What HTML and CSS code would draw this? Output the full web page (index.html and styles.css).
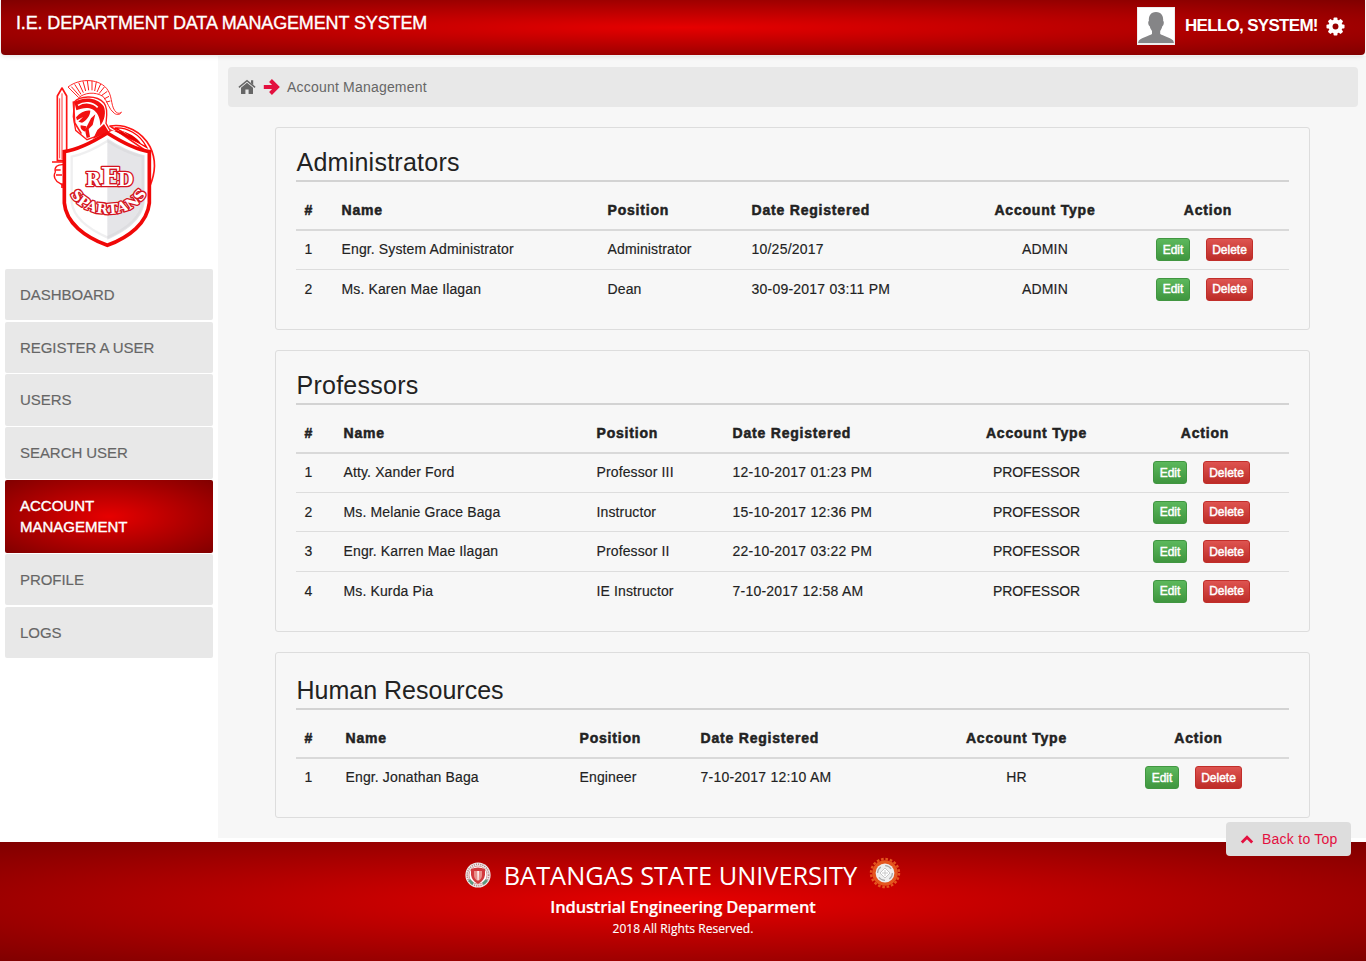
FILE: index.html
```html
<!DOCTYPE html>
<html lang="en">
<head>
<meta charset="utf-8">
<title>Account Management</title>
<link rel="stylesheet" href="styles.css">
</head>
<body>
<header class="topbar">
  <div class="brand">I.E. DEPARTMENT DATA MANAGEMENT SYSTEM</div>
  <div class="user">
    <svg class="avatar" viewBox="0 0 38 38"><rect width="38" height="38" fill="#ededed"/><rect x="1" y="1" width="36" height="35" fill="#fff"/><path d="M19 5c5.500 0 7.500 4 7.200 9 1 0 .8 4.500-.8 5-.4 2-1.400 3.600-2.200 5v3c3 2 9 3 13 6.500l.8 2.500H1l.8-2.500C6 30 12 29 15 27v-3c-1-1.500-1.900-3-2.300-5-1.600-.5-1.900-5-.8-5C11.500 9 13.500 5 19 5z" fill="#858587"/></svg>
    <span class="hello">HELLO, SYSTEM!</span>
    <svg class="gear" viewBox="0 0 20 20"><g fill="#fff"><circle cx="10" cy="10" r="7.400"/><g id="teeth"><rect x="7.900" y=".5" width="4.200" height="19" rx="1"/><rect x=".5" y="7.900" width="19" height="4.200" rx="1"/></g><use href="#teeth" transform="rotate(45 10 10)"/></g><circle cx="10" cy="10" r="3.100" fill="#960000"/></svg>
  </div>
</header>
<div class="layout">
  <aside class="sidebar">
    <svg class="logo" viewBox="0 0 390 555">
      <g fill="#fff" stroke="#ff1414" stroke-width="5" stroke-linejoin="round">
        <path d="M52 272V78l14-24 14 24v194z"/>
        <path d="M66 70v198M59 85v180" stroke-width="2.500" fill="none"/>
        <path d="M210 168c48-8 96 18 120 62 18 36 17 78-1 120V250z"/>
        <path d="M72 284c-20-2-30 8-26 22-8 12 0 28 14 34l12 8z" stroke-width="4"/>
        <path d="M36 276h36M46 300h16M48 315h18M66 340v14" fill="none" stroke-width="5"/>
      </g>
      <path d="M224 174c36-3 76 18 96 58-16-9-38-22-60-31-8-12-19-21-36-27z" fill="#fff" stroke="#f00" stroke-width="4"/>
      <path d="M212 182c35-1 52 8 64 27l-66-32zM236 180c30 8 55 21 68 42l-30-14c-7-14-20-22-38-28z" fill="#e60000"/>
      <path d="M84 51c38-29 98-25 120 10 14 22 8 52 25 66 6 5 12 3 15-1-2 8-12 10-21 4-17-12-20-36-34-51-25-15-55-11-73 4z" fill="#fff" stroke="#ff2b2b" stroke-width="3"/>
      <g stroke="#ff1a1a" stroke-width="3"><path d="M94 50l24 27M104 43l19 30M116 38l14 30M129 34l8 29M142 32l4 29M156 32v29M169 35l-5 28M182 42l-11 24M193 51l-16 20M202 64l-18 13M207 79l-15 8M211 93l-12 3"/></g>
      <path d="M103 96c14-17 65-24 89 3 13 15 8 42 6 61l13 23-70 26-34-28-7-41z" fill="#fff" stroke="#ff1a1a" stroke-width="4"/>
      <path d="M103 96c28-17 70-14 88 13 8 18 3 42-10 58 0-24-10-42-24-49-15-8-33-3-48 3zM108 142c14-16 28-22 43-20-1 18-14 30-25 36l-11-3 14-14-18 10zM122 166l17 3-5 16c-8-4-14-9-12-19zM153 145l13-12-8 32-12 12 4 24-10 3-5-24zM172 180l20-18 13 21-46 24z" fill="#f21010"/>
      <path d="M114 106c19-12 44-10 59 6" fill="none" stroke="#fff" stroke-width="5"/>
      <path d="M100 94l4 64 20 33" fill="none" stroke="#ff1a1a" stroke-width="5"/>
      <path d="M202 189C160 215 119 238 73 245v154c5 60 62 102 129 127 66-25 120-67 126-127V245c-45-7-85-30-126-56z" fill="#fff" stroke="#f00808" stroke-width="11"/>
      <path d="M202 205v304c55-23 105-60 112-110V256c-41-10-77-28-112-51z" fill="#e5e5e8"/>
      <path d="M202 213c-33 21-69 39-107 47v137c6 46 55 82 107 105 52-23 100-59 106-105V260c-38-8-73-26-106-47z" fill="none" stroke="#c9c9cc" stroke-opacity=".3" stroke-width="7"/>
      <path id="curve" d="M91 372C130 450 275 454 321 370" fill="none"/>
      <g class="crest-text">
        <text y="347" font-size="54"><tspan x="137">R</tspan><tspan x="182" font-size="78">E</tspan><tspan x="233" font-size="54">D</tspan></text>
        <text font-size="42"><textPath href="#curve" textLength="272" lengthAdjust="spacingAndGlyphs">SPARTANS</textPath></text>
      </g>
    </svg>
    <nav class="menu">
      <a>DASHBOARD</a>
      <a>REGISTER A USER</a>
      <a>USERS</a>
      <a>SEARCH USER</a>
      <a class="active">ACCOUNT<br>MANAGEMENT</a>
      <a>PROFILE</a>
      <a>LOGS</a>
    </nav>
  </aside>
  <main class="content">
    <div class="crumbs">
      <svg class="home" viewBox="0 0 18 16"><path d="M9 3.700l6 5V14.500q0 .6-.6.6H10.600V10.600H7.400v4.500H3.600q-.6 0-.6-.6V8.700z" fill="#666"/><path d="M.9 8.300L9 1.600l8.100 6.700" fill="none" stroke="#666" stroke-width="1.500"/><path d="M13 1.300h2.200v4.800L13 4.300z" fill="#666"/></svg>
      <svg class="arrow" viewBox="0 0 17 18"><path d="M.8 9h13M7.500 2.500L14 9l-6.500 6.500" fill="none" stroke="#e3103f" stroke-width="4"/></svg>
      <span>Account Management</span>
    </div>
    <section class="card">
      <h2>Administrators</h2>
      <table class="admins">
        <colgroup><col class="c1"><col class="c2"><col class="c3"><col class="c4"><col class="c5"><col class="c6"></colgroup>
        <thead><tr><th>#</th><th>Name</th><th>Position</th><th>Date Registered</th><th>Account Type</th><th>Action</th></tr></thead>
        <tbody>
          <tr><td>1</td><td>Engr. System Administrator</td><td>Administrator</td><td>10/25/2017</td><td>ADMIN</td><td><div class="acts"><button class="edit">Edit</button><button class="del">Delete</button></div></td></tr>
          <tr><td>2</td><td>Ms. Karen Mae Ilagan</td><td>Dean</td><td>30-09-2017 03:11 PM</td><td>ADMIN</td><td><div class="acts"><button class="edit">Edit</button><button class="del">Delete</button></div></td></tr>
        </tbody>
      </table>
    </section>
    <section class="card">
      <h2>Professors</h2>
      <table class="profs">
        <colgroup><col class="c1"><col class="c2"><col class="c3"><col class="c4"><col class="c5"><col class="c6"></colgroup>
        <thead><tr><th>#</th><th>Name</th><th>Position</th><th>Date Registered</th><th>Account Type</th><th>Action</th></tr></thead>
        <tbody>
          <tr><td>1</td><td>Atty. Xander Ford</td><td>Professor III</td><td>12-10-2017 01:23 PM</td><td>PROFESSOR</td><td><div class="acts"><button class="edit">Edit</button><button class="del">Delete</button></div></td></tr>
          <tr><td>2</td><td>Ms. Melanie Grace Baga</td><td>Instructor</td><td>15-10-2017 12:36 PM</td><td>PROFESSOR</td><td><div class="acts"><button class="edit">Edit</button><button class="del">Delete</button></div></td></tr>
          <tr><td>3</td><td>Engr. Karren Mae Ilagan</td><td>Professor II</td><td>22-10-2017 03:22 PM</td><td>PROFESSOR</td><td><div class="acts"><button class="edit">Edit</button><button class="del">Delete</button></div></td></tr>
          <tr><td>4</td><td>Ms. Kurda Pia</td><td>IE Instructor</td><td>7-10-2017 12:58 AM</td><td>PROFESSOR</td><td><div class="acts"><button class="edit">Edit</button><button class="del">Delete</button></div></td></tr>
        </tbody>
      </table>
    </section>
    <section class="card tall">
      <h2>Human Resources</h2>
      <table class="hr">
        <colgroup><col class="c1"><col class="c2"><col class="c3"><col class="c4"><col class="c5"><col class="c6"></colgroup>
        <thead><tr><th>#</th><th>Name</th><th>Position</th><th>Date Registered</th><th>Account Type</th><th>Action</th></tr></thead>
        <tbody>
          <tr><td>1</td><td>Engr. Jonathan Baga</td><td>Engineer</td><td>7-10-2017 12:10 AM</td><td>HR</td><td><div class="acts"><button class="edit">Edit</button><button class="del">Delete</button></div></td></tr>
        </tbody>
      </table>
    </section>
  </main>
</div>
<footer class="footer">
  <div class="univ">
    <svg class="seal" viewBox="0 0 26 26"><circle cx="13" cy="13" r="12.600" fill="#eee"/><circle cx="13" cy="13" r="10.800" fill="none" stroke="#b88" stroke-width="1.600" stroke-dasharray="1.200 1"/><circle cx="13" cy="13" r="9" fill="#fff" stroke="#c66" stroke-width=".6"/><path d="M6 7q7-3 14 0v6q-1 6-7 9-6-3-7-9z" fill="#d2393c"/><path d="M9 9h8v4q0 4-4 6-4-2-4-6z" fill="#e88f8a"/><path d="M12.300 9h1.600l-.3 9h-1z" fill="#fff"/><path d="M4 18l4 4M22 18l-4 4" stroke="#5a9c80" stroke-width="2.600"/></svg>
    <span>BATANGAS STATE UNIVERSITY</span>
    <svg class="cog" viewBox="0 0 32 32"><circle cx="16" cy="16" r="14" fill="none" stroke="#e4561e" stroke-width="2.400" stroke-dasharray="2.600 1.798"/><circle cx="16" cy="16" r="12.800" fill="#e4561e"/><circle cx="16" cy="16" r="9.400" fill="#eee"/><circle cx="16" cy="16" r="7.400" fill="none" stroke="#aaa" stroke-width="1.200" stroke-dasharray="7 4.600"/><path d="M16 11l5 5-5 5-5-5z" fill="#fff" stroke="#bbb" stroke-width=".8"/><path d="M16 13v6M13 16h6" stroke="#c8c8c8" stroke-width="1"/></svg>
  </div>
  <div class="dept">Industrial Engineering Deparment</div>
  <div class="rights">2018 All Rights Reserved.</div>
</footer>
<a class="totop"><svg viewBox="0 0 14 10"><path d="M1.800 8.400L7 3.200l5.200 5.200" fill="none" stroke="#e3103f" stroke-width="2.800"/></svg>Back to Top</a>
</body>
</html>
```
FILE: styles.css
```css
* { box-sizing: border-box; }
body { margin: 0; width: 1366px; height: 961px; position: relative; overflow: hidden; background: #fff; color: #222; font: 14px/20px "Liberation Sans", Arial, sans-serif; display: flex; flex-direction: column; }
.topbar { height: 55px; flex: none; margin: 0 1px 1px; padding: 0 20px 0 15px; border-radius: 0 0 4px 4px; background: radial-gradient(#e60000, #800000); box-shadow: 0 1px 5px rgba(0, 0, 0, .12); color: #fff; display: flex; justify-content: space-between; position: relative; }
.brand { font-size: 18px; line-height: 22px; padding-top: 12px; letter-spacing: -.13px; -webkit-text-stroke: .35px #fff; }
.user { display: flex; align-items: center; height: 52px; }
.avatar { width: 38px; height: 38px; margin-right: 10px; }
.hello { font-size: 17px; font-weight: bold; letter-spacing: -.7px; width: 141px; white-space: nowrap; }
.gear { width: 19px; height: 19px; }
.layout { display: flex; height: 782px; flex: none; }
.sidebar { width: 218px; flex: none; padding: 14px 5px 0; }
.logo { display: block; width: 130px; height: 185px; margin-left: 35px; }
.crest-text { font-family: "DejaVu Serif", serif; font-weight: bold; fill: #fff; stroke: #d41420; stroke-width: 8px; stroke-linejoin: round; paint-order: stroke; }
.menu { display: flex; flex-direction: column; gap: 1.3px; padding-top: 14px; }
.menu a { width: 208px; padding: 15px; font-size: 15px; line-height: 21.400px; letter-spacing: -.05px; color: #666; background: #e8e8e8; border-radius: 2px; -webkit-text-stroke: .15px; }
.menu .active { color: #fff; background: radial-gradient(#e60000, #800000); letter-spacing: 0; -webkit-text-stroke: .4px; }
.content { flex: 1; background: #f7f7f7; padding: 11px 8px 0 10px; }
.crumbs { height: 40px; background: #e8e8e8; border-radius: 4px; display: flex; align-items: center; padding-left: 10px; margin-bottom: 20px; color: #666; letter-spacing: .2px; }
.home { width: 18px; height: 16px; margin-right: 7px; }
.arrow { width: 17px; height: 18px; margin-right: 7px; }
.card { width: 1035px; margin: 0 0 20.500px 47px; padding: 0 20px 19.400px; border: 1px solid #ddd; border-radius: 3px; }
.card h2 { margin: 0; height: 54px; padding: 20px 0 0 .5px; border-bottom: 2px solid #d3d3d3; font-size: 25px; line-height: 28px; font-weight: normal; letter-spacing: .25px; }
.card.tall h2 { height: 57px; padding-top: 23px; letter-spacing: 0; }
table { width: 993px; table-layout: fixed; border-collapse: separate; border-spacing: 0; }
th, td { padding: 0 0 0 8.500px; text-align: left; }
th { height: 48.500px; border-bottom: 2px solid #d9d9d9; font-size: 14px; letter-spacing: .8px; padding-top: 9px; -webkit-text-stroke: .5px; }
td { height: 39.400px; border-bottom: 1px solid #ddd; letter-spacing: .13px; padding-bottom: 1px; -webkit-text-stroke: .15px; }
tr:last-child td { border-bottom-color: transparent; }
th:nth-child(n+5), td:nth-child(n+5) { text-align: center; padding-left: 0; }
td:nth-child(4) { letter-spacing: .22px; }
.profs td:nth-child(5) { letter-spacing: -.1px; }
.admins .c1 { width: 37px; } .admins .c2 { width: 266px; } .admins .c3 { width: 144px; } .admins .c4 { width: 220px; } .admins .c5 { width: 164px; } .admins .c6 { width: 162px; }
.profs .c1 { width: 39px; } .profs .c2 { width: 253px; } .profs .c3 { width: 136px; } .profs .c4 { width: 228px; } .profs .c5 { width: 169px; } .profs .c6 { width: 168px; }
.hr .c1 { width: 41px; } .hr .c2 { width: 234px; } .hr .c3 { width: 121px; } .hr .c4 { width: 233px; } .hr .c5 { width: 183px; } .hr .c6 { width: 181px; }
.acts { display: flex; justify-content: center; gap: 16px; padding: 1px 7px 0 0; }
.hr .acts { padding-right: 10px; }
button { height: 23px; padding: 0; border-radius: 3px; color: #fff; font: 12px/18px "Liberation Sans", Arial, sans-serif; -webkit-text-stroke: .45px #fff; }
.edit { width: 34px; background: linear-gradient(#5cb85c, #3f963f); border: 1px solid #419641; }
.del { width: 47px; background: linear-gradient(#de5450, #bd2c28); border: 1px solid #c12e2a; }
.footer { margin-top: 4px; flex: 1; background: radial-gradient(#e60000, #800000); color: #fff; font-family: "Open Sans", sans-serif; text-align: center; }
.univ { display: flex; justify-content: center; align-items: center; height: 55px; padding-top: 11px; font-size: 25.350px; line-height: 34px; }
.seal { width: 26px; height: 26px; margin-right: 13px; }
.cog { width: 32px; height: 32px; margin: -5px 0 0 12px; }
.dept { font-size: 16.500px; font-weight: 600; line-height: 20px; letter-spacing: -.16px; -webkit-text-stroke: .2px; }
.rights { font-size: 12px; line-height: 22px; padding-top: 1px; letter-spacing: .06px; -webkit-text-stroke: .15px; }
.totop { position: absolute; left: 1226px; top: 822px; width: 125px; height: 34px; border-radius: 4px; background: #ddd; color: #e3103f; display: flex; align-items: center; padding-left: 14px; letter-spacing: .25px; }
.totop svg { width: 14px; height: 10px; margin-right: 8px; }
```
